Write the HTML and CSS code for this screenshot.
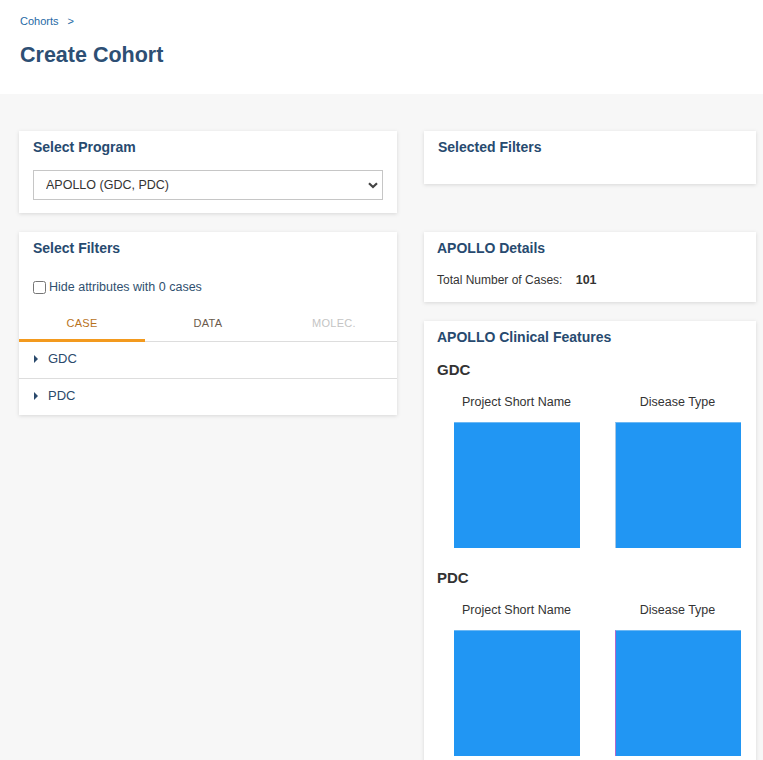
FILE: index.html
```html
<!DOCTYPE html>
<html lang="en">
<head>
<meta charset="utf-8">
<title>Create Cohort</title>
<link rel="stylesheet" href="styles.css">
</head>
<body>
<header class="page-header">
  <nav class="breadcrumb"><a href="#">Cohorts</a><span class="sep">&gt;</span></nav>
  <h1 class="page-title">Create Cohort</h1>
</header>
<main class="layout">
  <section class="card program-card">
    <h2 class="card-title">Select Program</h2>
    <div class="select-wrap">
      <select class="program-select">
        <option>APOLLO (GDC, PDC)</option>
      </select>
      <svg class="chevron" width="10" height="7" viewBox="0 0 10 7"><path d="M1 1.2 L5 5 L9 1.2" fill="none" stroke="#444" stroke-width="2.2"/></svg>
    </div>
  </section>
  <section class="card selected-card">
    <h2 class="card-title">Selected Filters</h2>
  </section>
  <section class="card filters-card">
    <h2 class="card-title">Select Filters</h2>
    <label class="hide-zero"><input type="checkbox"> Hide attributes with 0 cases</label>
    <div class="tabs">
      <div class="tab active">CASE</div>
      <div class="tab">DATA</div>
      <div class="tab disabled">MOLEC.</div>
    </div>
    <div class="tree-row"><span class="caret"></span>GDC</div>
    <div class="tree-row"><span class="caret"></span>PDC</div>
  </section>
  <div class="right-stack">
    <section class="card details-card">
      <h2 class="card-title">APOLLO Details</h2>
      <p class="total">Total Number of Cases: <b>101</b></p>
    </section>
    <section class="card features-card">
      <h2 class="card-title">APOLLO Clinical Features</h2>
      <h3 class="source">GDC</h3>
      <div class="charts">
        <div class="chart"><div class="chart-label">Project Short Name</div><div class="square"></div></div>
        <div class="chart"><div class="chart-label">Disease Type</div><div class="square edge-light"></div></div>
      </div>
      <h3 class="source pdc">PDC</h3>
      <div class="charts">
        <div class="chart"><div class="chart-label">Project Short Name</div><div class="square"></div></div>
        <div class="chart"><div class="chart-label">Disease Type</div><div class="square edge-purple"></div></div>
      </div>
    </section>
  </div>
</main>
</body>
</html>
```
FILE: styles.css
```css
* { box-sizing: border-box; }
html, body { margin: 0; padding: 0; }
body {
  background: #f7f7f7;
  font-family: "Liberation Sans", Arial, sans-serif;
  color: #333;
  width: 763px;
  height: 760px;
  overflow: hidden;
}
.page-header {
  background: #fff;
  height: 94px;
  padding: 14px 20px 0;
}
.breadcrumb {
  font-size: 11px;
  line-height: 14px;
  color: #1f6aa5;
}
.breadcrumb a { color: #1f6aa5; text-decoration: none; }
.breadcrumb .sep { margin-left: 9px; }
.page-title {
  margin: 14px 0 0;
  font-size: 21.5px;
  line-height: 26px;
  font-weight: bold;
  color: #2d4f74;
}
.layout {
  display: grid;
  grid-template-columns: 378px 332px;
  column-gap: 27px;
  row-gap: 19px;
  padding: 37px 7px 0 19px;
  align-items: start;
}
.card {
  background: #fff;
  box-shadow: 0 1px 4px rgba(0,0,0,0.13);
  padding: 6px 14px 0;
}
.card-title {
  margin: 0;
  font-size: 14px;
  line-height: 20px;
  font-weight: bold;
  color: #274a6f;
}
.program-card { padding-bottom: 13px; }
.select-wrap { position: relative; margin-top: 13px; }
.program-select {
  appearance: none;
  -webkit-appearance: none;
  width: 100%;
  height: 30px;
  border: 1px solid #c6c6c6;
  border-radius: 0;
  background: #fff;
  padding: 0 12px;
  font-family: "Liberation Sans", Arial, sans-serif;
  font-size: 12.5px;
  color: #333;
}
.chevron { position: absolute; right: 5px; top: 12px; }
.selected-card { height: 53px; }
.filters-card { padding: 6px 0 0; }
.filters-card .card-title { padding: 0 14px; }
.hide-zero {
  display: flex;
  align-items: center;
  margin-top: 19px;
  padding: 0 14px;
  font-size: 12.5px;
  line-height: 20px;
  color: #30506f;
}
.hide-zero input { margin: 0 3px 0 0; width: 13px; height: 13px; }
.tabs {
  display: grid;
  grid-template-columns: repeat(3, 1fr);
  margin-top: 8px;
  border-bottom: 1px solid #ddd;
}
.tab {
  position: relative;
  height: 36px;
  line-height: 36px;
  text-align: center;
  font-size: 11px;
  letter-spacing: 0.3px;
  color: #6a5a4c;
}
.tab.active { color: #b8721c; }
.tab.active::after {
  content: "";
  position: absolute;
  left: 0; right: 0; bottom: -1px;
  height: 3px;
  background: #f39a1e;
}
.tab.disabled { color: #c4c4c4; }
.tree-row {
  display: flex;
  align-items: center;
  padding: 7px 14px 9px 15px;
  line-height: 20px;
  font-size: 13px;
  color: #2b4a6c;
  border-bottom: 1px solid #ddd;
}
.tree-row:last-child { border-bottom: none; }
.caret {
  width: 0; height: 0;
  border-top: 4px solid transparent;
  border-bottom: 4px solid transparent;
  border-left: 4px solid #2b4a6c;
  margin-right: 10px;
}
.right-stack { display: flex; flex-direction: column; gap: 19px; }
.details-card { padding: 6px 13px 13px; height: 70px; }
.total {
  margin: 12px 0 0;
  font-size: 12px;
  line-height: 20px;
  color: #333;
}
.total b { margin-left: 10px; font-size: 12.5px; }
.features-card { padding: 6px 13px 20px; min-height: 460px; }
.source {
  margin: 13px 0 0;
  font-size: 15px;
  line-height: 20px;
  font-weight: bold;
  color: #333;
}
.source.pdc { margin-top: 20px; }
.charts {
  display: grid;
  grid-template-columns: 161px 161px;
  margin: 12px 0 0 -1px;
}
.chart { display: flex; flex-direction: column; align-items: center; }
.chart-label {
  font-size: 12.5px;
  line-height: 20px;
  color: #333;
}
.square {
  margin-top: 10px;
  width: 126px;
  height: 126px;
  background: #2196f3;
  border-top: 1px solid #6cb8f4;
}
.square.edge-light { border-left: 1px solid #a9c7e3; }
.square.edge-purple { border-left: 1px solid #b567c8; }
```
